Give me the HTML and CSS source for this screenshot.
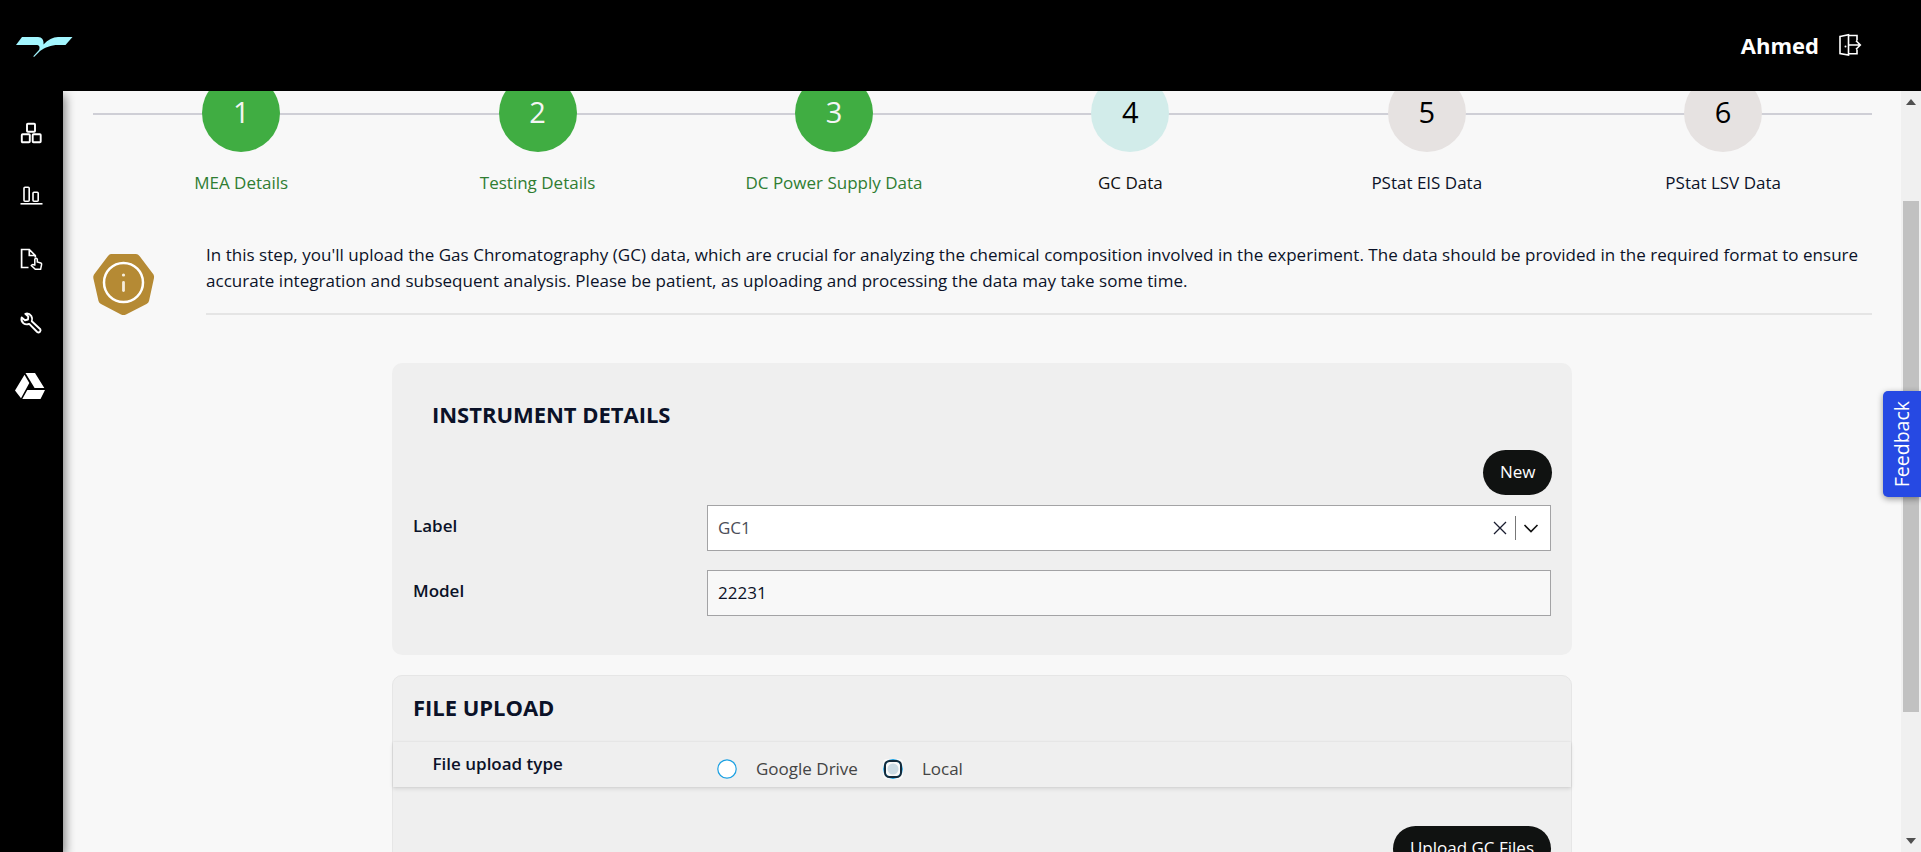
FILE: index.html
```html
<!DOCTYPE html>
<html lang="en">
<head>
<meta charset="utf-8">
<title>GC Data</title>
<link rel="stylesheet" href="styles.css">
</head>
<body>
<header class="topbar">
  <svg class="logo" width="57" height="22" viewBox="0 0 57 22"><path fill="#a3f6ff" d="M6 1H22C26 1 28 4 27.500 8.500C32 3.500 37 1 42 1H56.500L49.500 9H42C35 9 29 11.500 24 15L18 21L17.300 20.300L23.200 13.800C24 11 23.500 9 20 9H0Z"/></svg>
  <div class="user">
    <span class="user-name">Ahmed</span>
    <svg width="24" height="24" viewBox="0 0 24 24" fill="none" stroke="#fff" stroke-width="1.600"><path d="M2 3.500L10.500 1.800V22L2 20.500ZM10.500 2.500H19V7.500M10.500 20.800H19V16.500M10 12H22M18 7.800L22.300 12L18 16.200"/><circle cx="7.500" cy="13.500" r="1" fill="#fff" stroke="none"/></svg>
  </div>
</header>
<div class="shell">
  <nav class="sidebar">
    <svg width="24" height="24" viewBox="0 0 24 24" fill="none" stroke="#fff" stroke-width="1.900"><rect x="8" y="2.800" width="8" height="8" rx=".8"/><rect x="2.800" y="13.300" width="8" height="8" rx=".8"/><rect x="13.700" y="13.300" width="8" height="8" rx=".8"/></svg>
    <svg width="24" height="24" viewBox="0 0 24 24" fill="none" stroke="#fff" stroke-width="1.600"><rect x="5" y="3.200" width="5.200" height="14" rx="1"/><rect x="14" y="8.200" width="5.200" height="9" rx="1"/><path d="M1.500 19.800H23.500"/></svg>
    <svg width="24" height="24" viewBox="0 0 24 24" fill="none" stroke="#fff" stroke-width="1.700"><path d="M9.500 19.500H2.600V1.500H10.300L16.300 7.500V9.500M10.300 1.500V7.500H15.800"/><path stroke-width="1.500" d="M15.800 17V11.200Q17 9.500 18.300 11.200V14L21.800 15Q22.800 15.300 22.600 16.500L21.600 21.300H16.300L12.300 17.500Q12.800 16 15.600 17Z"/></svg>
    <svg width="24" height="24" viewBox="0 0 24 24" fill="none" stroke="#fff" stroke-width="1.900" stroke-linejoin="round"><path d="M6.300 2.800Q10 1.800 12.300 5Q13.800 7.500 12.800 10.300L21.300 18.300Q22 19.500 21 20.700Q19.600 22 18.200 21L10.200 12.900Q7 14.200 4.400 12.200Q1.700 10 2.700 6.500L6 9.200L9 8.500L9.300 5.500Z"/></svg>
    <svg class="drive" width="30" height="26" viewBox="0 0 30 26" fill="#fff"><path d="M10.500 0H20L29.300 15H19.600ZM9.500 1.800L14.300 10L6 25.300L0 17.500ZM12.300 17H30L25.500 26H7.300Z"/></svg>
  </nav>
  <main class="page">
    <section class="stepper">
      <div class="step done"><div class="dot">1</div><div class="step-name">MEA Details</div></div>
      <div class="step done"><div class="dot">2</div><div class="step-name">Testing Details</div></div>
      <div class="step done"><div class="dot">3</div><div class="step-name">DC Power Supply Data</div></div>
      <div class="step current"><div class="dot">4</div><div class="step-name">GC Data</div></div>
      <div class="step"><div class="dot">5</div><div class="step-name">PStat EIS Data</div></div>
      <div class="step"><div class="dot">6</div><div class="step-name">PStat LSV Data</div></div>
    </section>
    <section class="intro">
      <svg width="62" height="62" viewBox="0 0 62 62"><path fill="#b58a34" d="M18 0H43Q45 0 46.500 2L60.500 20.500Q61.400 22 61 24L56 47Q55.500 49 53.500 50L33 60.500Q30.500 61.500 28 60.500L8 50Q6 49 5.500 47L.3 24Q0 22 1 20.500L15 2Q16.500 0 18 0Z"/><circle cx="30.500" cy="28.500" r="19.500" fill="none" stroke="#fff" stroke-width="2.500"/><path d="M30.500 28.500V36.500" stroke="#f5eddc" stroke-width="2.800" stroke-linecap="round"/><circle cx="30.500" cy="21" r="1.600" fill="#f5eddc"/></svg>
      <p class="intro-text">In this step, you'll upload the Gas Chromatography (GC) data, which are crucial for analyzing the chemical composition involved in the experiment. The data should be provided in the required format to ensure accurate integration and subsequent analysis. Please be patient, as uploading and processing the data may take some time.</p>
    </section>
    <section class="card instrument">
      <h2 class="card-title indented">INSTRUMENT DETAILS</h2>
      <div class="actions"><button class="pill">New</button></div>
      <div class="field">
        <label class="field-label">Label</label>
        <div class="select"><span class="select-value">GC1</span>
          <svg width="14" height="14" viewBox="0 0 14 14" fill="none" stroke="#1a1d30" stroke-width="1.300"><path d="M1 1L13 13M13 1L1 13"/></svg>
          <span class="bar"></span>
          <svg width="16" height="10" viewBox="0 0 16 10" fill="none" stroke="#111" stroke-width="1.600"><path d="M1.500 2L8 8.500L14.500 2"/></svg>
        </div>
      </div>
      <div class="field"><label class="field-label">Model</label><div class="input">22231</div></div>
    </section>
    <section class="card upload">
      <h2 class="card-title">FILE UPLOAD</h2>
      <div class="type-row">
        <span class="type-label">File upload type</span>
        <div class="radios">
          <svg width="20" height="20" viewBox="0 0 20 20"><circle cx="10" cy="10" r="9.200" fill="#fff" stroke="#1ba0e2" stroke-width="1.200"/></svg>
          <span class="radio-name">Google Drive</span>
          <svg width="20" height="20" viewBox="0 0 20 20"><rect x="0" y="0" width="20" height="20" rx="4" fill="#f9f9f9"/><circle cx="10" cy="10" r="9.200" fill="none" stroke="#1ba0e2" stroke-width="1.400"/><circle cx="10" cy="10" r="5.500" fill="#cbdbe4"/><rect x="2" y="2" width="16" height="16" rx="4.500" fill="none" stroke="#152b3b" stroke-width="2"/></svg>
          <span class="radio-name">Local</span>
        </div>
      </div>
      <div class="upload-actions"><button class="pill">Upload GC Files</button></div>
    </section>
  </main>
  <div class="scrollbar">
    <svg width="10" height="6" viewBox="0 0 10 6"><path fill="#505050" d="M0 6L5 0L10 6Z"/></svg>
    <div class="thumb"></div>
    <svg width="10" height="6" viewBox="0 0 10 6"><path fill="#505050" d="M0 0L5 6L10 0Z"/></svg>
  </div>
</div>
<div class="feedback"><span class="feedback-text">Feedback</span></div>
</body>
</html>
```

FILE: styles.css
```css
* { box-sizing: border-box; }
body {
  margin: 0;
  height: 852px;
  overflow: hidden;
  display: flex;
  flex-direction: column;
  background: #f8f8f8;
  color: #0b1228;
  font: 17px/25.5px "Open Sans", sans-serif;
}
.topbar {
  height: 91px;
  flex: none;
  display: flex;
  align-items: center;
  justify-content: space-between;
  padding: 0 59px 0 16px;
  background: #000;
}
.logo { margin-top: 3px; }
.user { display: flex; align-items: center; gap: 19px; color: #fff; }
.user svg { margin-bottom: 1px; }
.user-name { font-size: 22px; font-weight: 700; }
.shell { flex: 1; min-height: 0; display: flex; }
.sidebar {
  width: 63px;
  flex: none;
  display: flex;
  flex-direction: column;
  align-items: flex-start;
  padding: 30px 0 0 19px;
  gap: 39.300px;
  background: #000;
  box-shadow: 2px 4px 10px rgba(0, 0, 0, .5);
  clip-path: inset(0 -20px 0 0);
  z-index: 1;
}
.drive { margin: -1px 0 0 -4px; }
.page { flex: 1; overflow: hidden; padding: 0 29px 0 30px; }
.stepper {
  margin-top: -17px;
  display: grid;
  grid-template-columns: repeat(6, 296.400px);
  background: linear-gradient(#cfcfd6, #cfcfd6) 0 39px / 100% 2px no-repeat;
}
.step { display: flex; flex-direction: column; align-items: center; gap: 18px; }
.dot {
  width: 78px;
  height: 78px;
  border-radius: 50%;
  background: #e6e2e1;
  color: #000;
  font-size: 29px;
  line-height: 76px;
  text-align: center;
}
.done { color: #2f7d32; }
.done .dot { background: #40ad42; color: #f5f5f5; }
.current { color: #111; }
.current .dot { background: #d2ecea; }
.intro { display: flex; gap: 51px; margin-top: 46.500px; }
.intro svg { flex: none; margin: 12px 0 -1px; }
.intro-text {
  margin: 0;
  flex: 1;
  height: 73px;
  border-bottom: 2px solid #e5e5e5;
  letter-spacing: .03px;
}
.card { width: 1180px; margin: 0 0 0 299px; border-radius: 10px; background: #efefef; }
.instrument { margin-top: 48px; height: 292px; padding: 35px 21px 0; }
.card-title { margin: 0; font-size: 22px; line-height: 32px; font-weight: 700; letter-spacing: -.03px; }
.indented { padding-left: 19px; }
.actions { display: flex; justify-content: flex-end; margin: 20px -1px 0 0; }
.pill {
  border: 0;
  height: 45px;
  padding: 0 16.500px 2px;
  border-radius: 23px;
  background: #101211;
  color: #fff;
  font: 500 17px/25px "Open Sans", sans-serif;
}
.field { display: flex; height: 46px; margin-top: 10px; }
.field + .field { margin-top: 19px; }
.field-label { width: 294px; padding-top: 8px; font-weight: 600; }
.select, .input {
  flex: 1;
  display: flex;
  align-items: center;
  height: 46px;
  padding: 0 11.500px 0 10px;
  border: 1px solid #a3a3a5;
}
.select { background: #fff; color: #4c4e58; }
.input { background: #f8f8f8; padding-bottom: 1px; }
.select-value { flex: 1; padding-bottom: 1px; }
.bar { width: 1px; height: 24px; margin: 0 7px 0 8px; background: #777; }
.upload { margin-top: 20px; height: 400px; border: 1px solid #e6e6e6; padding-top: 15px; }
.upload .card-title { padding-left: 20px; }
.type-row {
  display: flex;
  height: 45px;
  margin-top: 19px;
  padding-left: 39.500px;
  box-shadow: 0 2px 4px rgba(0, 0, 0, .1), 0 0 2px rgba(0, 0, 0, .08);
}
.type-label { width: 284.500px; padding-top: 9px; font-weight: 600; }
.radios { display: flex; align-items: center; padding-top: 9px; color: #444; }
.radio-name { margin: 0 25px 0 19px; padding-bottom: 1px; }
.upload-actions { display: flex; justify-content: flex-end; padding: 39px 20px 0; }
.upload-actions .pill { padding: 0 17px 2px; }
.scrollbar {
  width: 20px;
  display: flex;
  flex-direction: column;
  align-items: center;
  padding: 8px 0;
  background: #f0f0f0;
}
.thumb { width: 16px; height: 511px; margin: 96px 0 auto; background: #c1c1c1; }
.feedback {
  position: absolute;
  z-index: 2;
  right: 0;
  top: 391px;
  width: 38px;
  height: 106px;
  display: flex;
  align-items: center;
  justify-content: center;
  border-radius: 5px 0 0 5px;
  background: #2649e3;
  color: #fff;
  box-shadow: 0 2px 6px rgba(0, 0, 0, .4);
}
.feedback-text {
  writing-mode: vertical-rl;
  transform: rotate(180deg);
  font-size: 19.500px;
  font-weight: 500;
  line-height: 28px;
}
```
